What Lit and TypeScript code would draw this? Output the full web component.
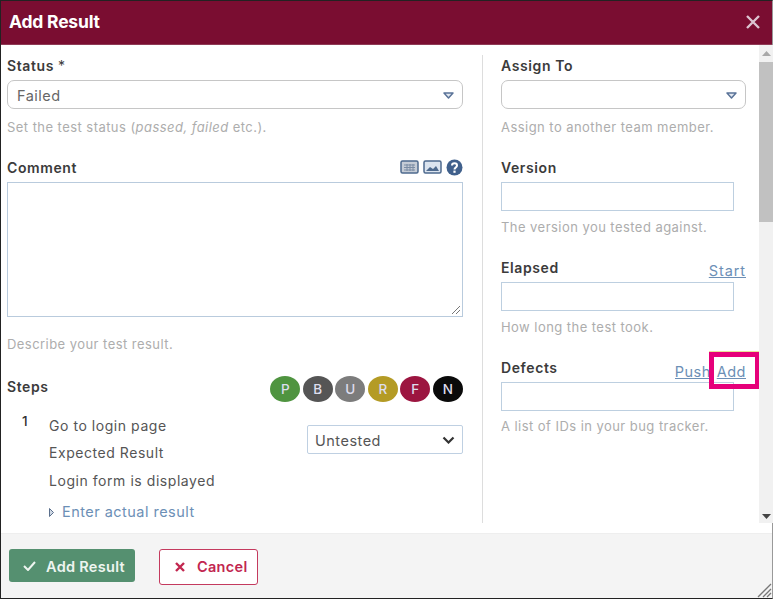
import { LitElement, html, css } from "lit";
import { customElement } from "lit/decorators.js";

const chevron = html`<svg class="tri" width="11" height="7" viewBox="0 0 11 7"><path d="M1 1h9L5.5 6z" fill="#e3e8f0" stroke="#5a7398" stroke-width="1.5" stroke-linejoin="round"/></svg>`;

@customElement("app-root")
export class AppRoot extends LitElement {
  static styles = css`
    :host { display: block; width: 773px; height: 599px; font-family: Inter, "Liberation Sans", sans-serif; color: #444; font-size: 14px; }
    * { box-sizing: border-box; }
    .dialog { width: 773px; height: 599px; display: flex; flex-direction: column; border: 1px solid #222; border-right-color: #999; background: #fff; }
    .head { height: 44px; flex: none; background: #7a0d31; display: flex; align-items: center; justify-content: space-between; padding: 0 11px 2px 8px; color: #fff; font-weight: 700; font-size: 17.5px; letter-spacing: -0.2px; border-bottom: 1px solid #8f3a55; }
    .main { flex: 1; min-height: 0; display: flex; }
    .content { flex: 1; display: grid; grid-template-columns: 482px 276px; }
    .left { padding: 0 19px 0 6px; height: 468px; overflow: hidden; margin-top: 10px; border-right: 1px solid #ddd; }
    .right { padding: 10px 0 0 18px; }
    .right-in { width: 245px; }
    label { display: block; font-size: 14px; font-weight: 600; color: #3b3b3b; line-height: 22px; height: 20px; letter-spacing: 0.6px; }
    .star { font-weight: 400; }
    .lrow { display: flex; justify-content: space-between; align-items: center; height: 20px; position: relative; }
    .sel { height: 29px; margin-top: 5px; border: 1px solid #c6c6c6; border-radius: 7px; display: flex; align-items: center; justify-content: space-between; padding: 1px 8px 0 9px; font-size: 14.5px; color: #666; letter-spacing: 0.5px; }
    .hint { font-size: 13px; color: #adadad; line-height: 18px; margin-top: 9px; height: 18px; white-space: nowrap; letter-spacing: 0.45px; }
    .hint-c { margin-top: 18px; }
    .hint-i { margin-top: 7px; }
    .hint-l { margin-top: 6px; }
    .gap { height: 21px; }
    .ta { height: 135px; margin-top: 5px; border: 1px solid #b9cbdd; position: relative; }
    .grip { position: absolute; right: 1px; bottom: 1px; }
    .tools { display: flex; gap: 4px; align-items: center; }
    .inp { height: 29px; width: 233px; margin-top: 5px; border: 1px solid #bdcfe0; }
    a { color: #6c8fb6; text-decoration: underline; font-size: 14.5px; line-height: 20px; letter-spacing: 0.5px; margin-top: 8px; }
    .start { letter-spacing: 0.9px; }
    .hl { position: absolute; left: 208px; top: -5px; width: 51px; height: 37px; border: 5px solid #e6007a; box-shadow: 0 -1px 0 #e7e39a; }
    .links { display: flex; margin-top: 2px; }
    .links a:first-child { width: 42px; overflow: hidden; }
    .dots { display: flex; margin-top: 1px; margin-right: -1px; }
    .dot { width: 32.5px; height: 26px; display: flex; align-items: center; justify-content: center; }
    .dot span { width: 30px; height: 26px; border-radius: 50%; color: #dde; font-size: 13.5px; font-weight: 500; display: flex; align-items: center; justify-content: center; }
    .steps { display: flex; justify-content: space-between; margin-top: 22px; }
    .steps label { margin-top: 1px; }
    .step { display: grid; grid-template-columns: 42px 1fr 156px; margin-top: 10px; }
    .num { font-size: 13.5px; font-weight: 500; padding-left: 15px; line-height: 20px; color: #333; margin-top: -1px; }
    .stxt { font-size: 14px; color: #555; letter-spacing: 0.55px; }
    .stxt div { height: 27px; line-height: 27px; }
    .stxt div + div + div { height: 30px; line-height: 30px; }
    .stxt .act { margin-top: 1px; display: flex; align-items: center; gap: 8px; color: #6c8fb6; font-size: 14.5px; white-space: nowrap; letter-spacing: 0.47px; }
    .us { height: 29px; margin-top: 13px; border: 1px solid #bfd0e2; border-radius: 2px; display: flex; align-items: center; justify-content: space-between; padding: 1px 7px 0; font-size: 14.5px; color: #555; letter-spacing: 0.5px; }
    .sb { width: 14px; flex: none; height: 478px; background: #f1f1f1; position: relative; display: flex; flex-direction: column; justify-content: space-between; align-items: center; padding: 6px 0 4px; }
    .thumb { position: absolute; left: 0; right: 0; top: 17px; height: 160px; background: #c1c1c1; }
    .foot { flex: none; height: 65px; background: #f4f4f4; border-top: 1px solid #eee; display: flex; padding: 15px 0 0 8px; position: relative; gap: 24px; align-items: flex-start; }
    button { font: inherit; display: flex; align-items: center; font-weight: 600; font-size: 14.5px; border-radius: 3px; letter-spacing: 0.3px; }
    .ok { width: 126px; height: 33px; background: #559070; border: none; color: #eef5f0; padding: 1px 0 0 14px; gap: 10px; }
    .no { width: 99px; height: 36px; background: #fff; border: 1px solid #c43a5e; color: #c2264f; padding: 0 0 1px 15px; gap: 12px; }
    .resize { position: absolute; right: 0; bottom: 0; }
  `;

  render() {
    const dots = [["P","#4f9440"],["B","#555"],["U","#7c7c7c"],["R","#b49b25"],["F","#9c1540"],["N","#0a0a0a"]];
    return html`<div class="dialog">
      <div class="head"><span>Add Result</span>
        <svg width="16" height="16" viewBox="0 0 16 16"><path d="M2 2l12 12M14 2L2 14" stroke="#dcc4d0" stroke-width="2.4"/></svg></div>
      <div class="main">
        <div class="content">
          <div class="left">
            <label>Status <span class="star">*</span></label>
            <div class="sel"><span>Failed</span>${chevron}</div>
            <div class="hint">Set the test status (<i>passed, failed</i> etc.).</div>
            <div class="gap"></div>
            <div class="lrow"><label>Comment</label>
              <div class="tools">
                <svg width="19" height="14" viewBox="0 0 19 14"><rect x="1" y="1" width="17" height="12" rx="1.5" fill="#c5ccd6" stroke="#4e6a8e" stroke-width="1.5"/><path d="M4 5h11M4 7.5h11M4 10h11M7 4v7M10 4v7M13 4v7" stroke="#7b8ca4"/></svg>
                <svg width="19" height="14" viewBox="0 0 19 14"><rect x="1" y="1" width="17" height="12" rx="1.5" fill="#dbe4ef" stroke="#4e6a8e" stroke-width="1.5"/><path d="M3 11l4-4 3 2 3-3 3 5z" fill="#4e6a8e"/></svg>
                <svg width="17" height="17" viewBox="0 0 17 17"><circle cx="8.5" cy="8.5" r="8" fill="#40608c"/><path d="M6 6.5c0-3 5-3 5 0 0 2-2.5 2-2.5 4" fill="none" stroke="#fff" stroke-width="2"/><rect x="7.4" y="11.6" width="2.2" height="2.2" fill="#fff"/></svg>
              </div></div>
            <div class="ta"><svg class="grip" width="10" height="10" viewBox="0 0 10 10"><path d="M9 1L1 9M9 5L5 9" stroke="#777"/></svg></div>
            <div class="hint hint-c">Describe your test result.</div>
            <div class="steps"><label>Steps</label>
              <div class="dots">${dots.map(([t,c]) => html`<div class="dot"><span style="background:${c}">${t}</span></div>`)}</div></div>
            <div class="step">
              <div class="num">1</div>
              <div class="stxt"><div>Go to login page</div><div>Expected Result</div><div>Login form is displayed</div>
                <div class="act"><svg width="5" height="9" viewBox="0 0 5 9"><path d="M.5.5L4.5 4.5.5 8.5z" fill="#cfd8e4" stroke="#5a6f8c"/></svg>Enter actual result</div></div>
              <div class="us"><span>Untested</span><svg width="13" height="8" viewBox="0 0 13 8"><path d="M1.5 1.5l5 5 5-5" fill="none" stroke="#333" stroke-width="2.2"/></svg></div>
            </div>
          </div>
          <div class="right"><div class="right-in">
            <label>Assign To</label>
            <div class="sel"><span></span>${chevron}</div>
            <div class="hint">Assign to another team member.</div>
            <div class="gap"></div>
            <label>Version</label><div class="inp"></div>
            <div class="hint hint-i">The version you tested against.</div>
            <div class="gap"></div>
            <div class="lrow"><label>Elapsed</label><a class="start">Start</a></div><div class="inp"></div>
            <div class="hint hint-i">How long the test took.</div>
            <div class="gap"></div>
            <div class="lrow"><label>Defects</label><div class="links"><a>Push</a><a>Add</a></div><div class="hl"></div></div>
            <div class="inp"></div>
            <div class="hint hint-l">A list of IDs in your bug tracker.</div>
          </div></div>
        </div>
        <div class="sb"><svg width="9" height="5" viewBox="0 0 9 5"><path d="M4.5 0L9 5H0z" fill="#a8a8a8"/></svg><div class="thumb"></div><svg width="9" height="5" viewBox="0 0 9 5"><path d="M4.5 5L9 0H0z" fill="#444"/></svg></div>
      </div>
      <div class="foot">
        <button class="ok"><svg width="13" height="10" viewBox="0 0 13 10"><path d="M1 5l4 4 7-8" fill="none" stroke="#eef5f0" stroke-width="2"/></svg>Add Result</button>
        <button class="no"><svg width="10" height="10" viewBox="0 0 10 10"><path d="M1 1l8 8M9 1l-8 8" stroke="#c2264f" stroke-width="2.4"/></svg>Cancel</button>
        <svg class="resize" width="16" height="16" viewBox="0 0 16 16"><path d="M15 2L2 15M15 7L7 15M15 11l-4 4" stroke="#777" stroke-width="1.3"/></svg>
      </div>
    </div>`;
  }
}
